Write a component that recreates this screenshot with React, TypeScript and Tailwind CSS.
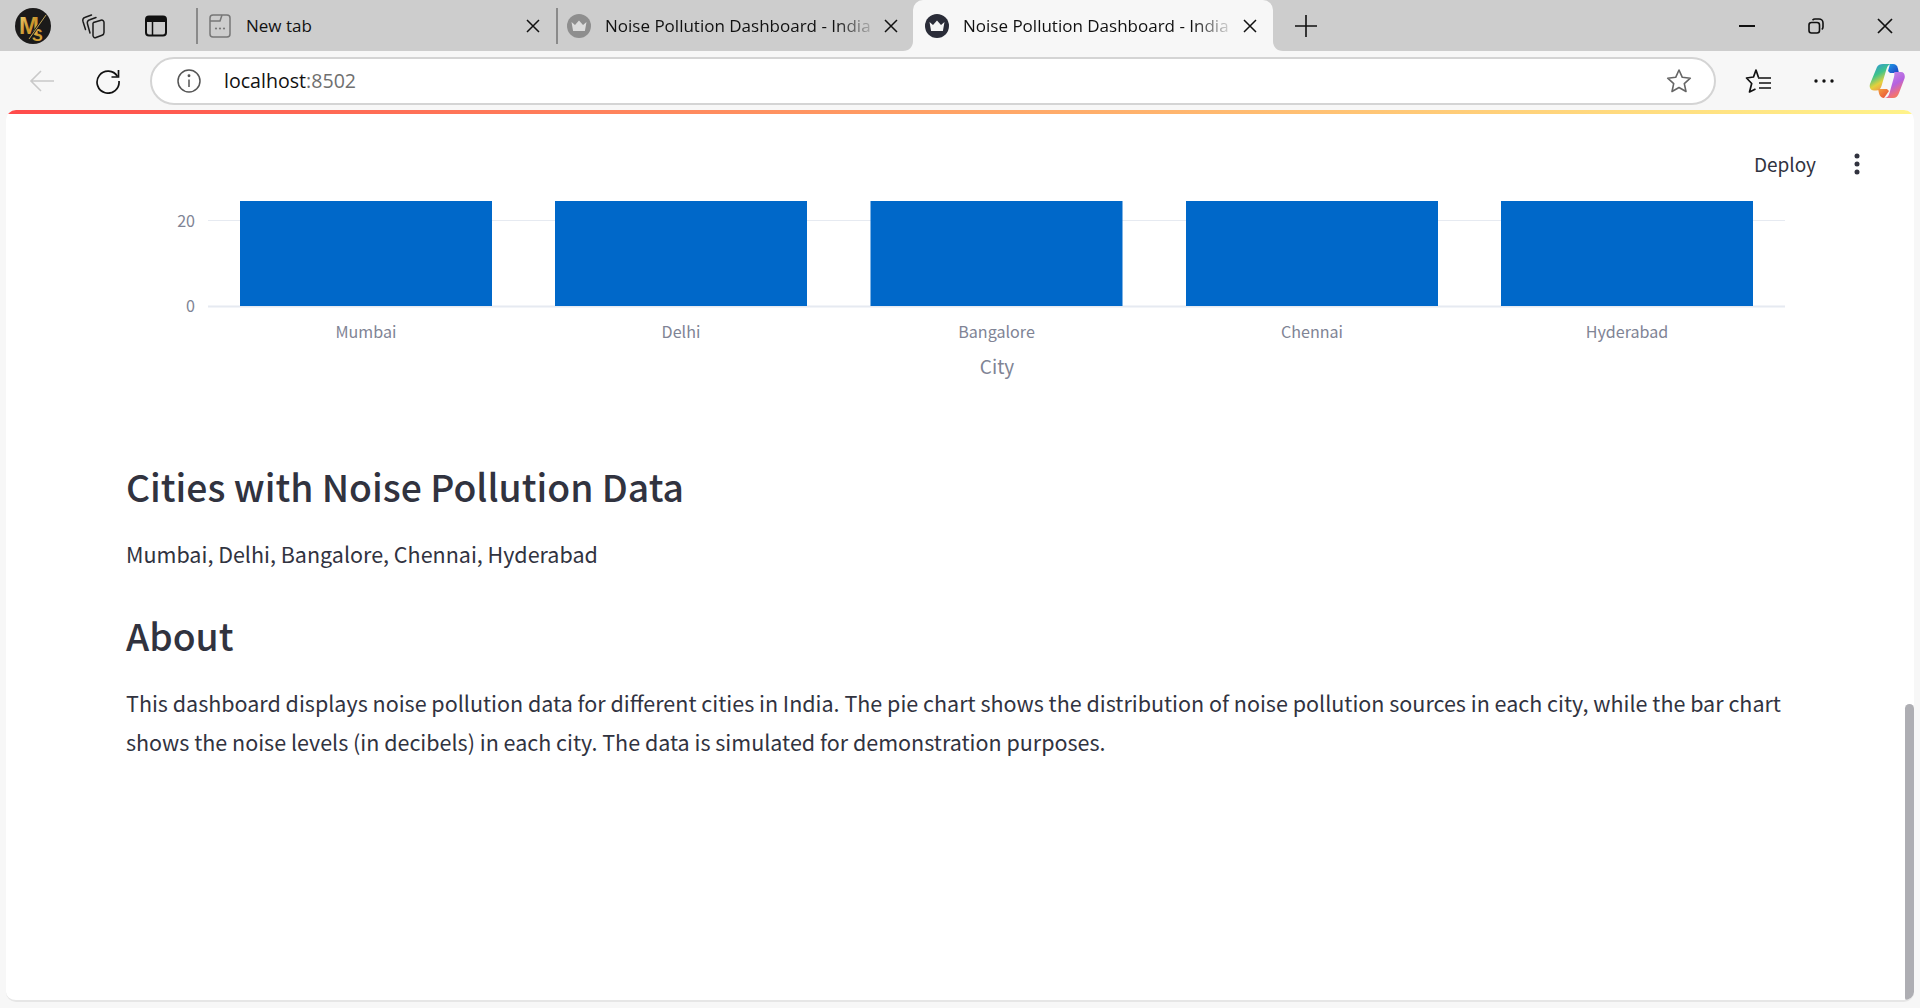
import React from "react";

const cjk = "font-['Noto_Sans_CJK_SC','Noto_Sans',sans-serif]";

function Crown({ active }: { active?: boolean }) {
  return (
    <svg width="24" height="24" viewBox="0 0 24 24" className="shrink-0">
      <circle cx="12" cy="12" r="12" fill={active ? "#2a2c38" : "#8e8e8e"} />
      <path d="M4.500 8 8 11l4-4.500 4 4.500 3.500-3-1.600 9H6.100z" fill={active ? "#f4f4f4" : "#dcdcdc"} />
    </svg>
  );
}

function CloseX() {
  return (
    <svg width="14" height="14" viewBox="0 0 14 14" className="shrink-0">
      <path d="M1 1l12 12M13 1L1 13" stroke="#111" strokeWidth="1.500" fill="none" />
    </svg>
  );
}

function Logo() {
  return (
    <svg width="36" height="36" viewBox="0 0 36 36">
      <defs>
        <linearGradient id="gold" x1="0" y1="0" x2="1" y2="1">
          <stop offset="0" stopColor="#f5d67a" />
          <stop offset="0.55" stopColor="#c8952b" />
          <stop offset="1" stopColor="#f0c14f" />
        </linearGradient>
      </defs>
      <circle cx="18" cy="18" r="18" fill="#1b1a1a" />
      <text x="4" y="26" fontSize="24" fontWeight="700" fill="url(#gold)" fontFamily="Liberation Sans, sans-serif">M</text>
      <text x="17" y="33" fontSize="16" fontWeight="700" fill="url(#gold)" fontFamily="Liberation Sans, sans-serif">S</text>
      <path d="M14 31 31 7" stroke="#1b1a1a" strokeWidth="2.500" />
      <path d="M14 31 31 7" stroke="#e8c465" strokeWidth="0.800" />
    </svg>
  );
}

function Copilot() {
  return (
    <svg width="36" height="38" viewBox="0 0 36 38">
      <defs>
        <linearGradient id="cpa" x1="0" y1="0" x2="0.500" y2="1">
          <stop offset="0" stopColor="#2b8be8" />
          <stop offset="0.45" stopColor="#3fc48a" />
          <stop offset="0.75" stopColor="#e3d13c" />
          <stop offset="1" stopColor="#f2994a" />
        </linearGradient>
        <linearGradient id="cpb" x1="0.200" y1="0" x2="0.700" y2="1">
          <stop offset="0" stopColor="#c48ce8" />
          <stop offset="0.5" stopColor="#b562e0" />
          <stop offset="0.8" stopColor="#ee6f7e" />
          <stop offset="1" stopColor="#f4824a" />
        </linearGradient>
        <linearGradient id="cpc" x1="0" y1="0" x2="1" y2="1">
          <stop offset="0" stopColor="#1f9be8" />
          <stop offset="1" stopColor="#1c3fc0" />
        </linearGradient>
        <linearGradient id="cpd" x1="0" y1="0" x2="1" y2="1">
          <stop offset="0" stopColor="#f4a23d" />
          <stop offset="1" stopColor="#e8483a" />
        </linearGradient>
      </defs>
      <path d="M21 2h3c2.500 0 4 1.500 4.800 4L30 11h-9L19 9z" fill="url(#cpc)" />
      <path d="M8 5c1-2 3-3 6-3h9c-3 0-4.500 1.500-5.500 5l-5 17c-1 3-2.500 4.500-5.500 4.500H5c-3.500 0-5-3-4-6.500z" fill="url(#cpa)" />
      <path d="M15 36c-2 0-4-1.500-4.800-4L9 27h9l2 2z" fill="url(#cpd)" />
      <path d="M25 10h7c3 0 4.500 3 3.500 6.500L30 31c-1 3-3 5-6 5h-9c3 0 4.500-1.500 5.500-5l4.500-16c.5-2 .5-5 0-5z" fill="url(#cpb)" />
    </svg>
  );
}

function TabCornerL() {
  return (
    <svg width="10" height="10" viewBox="0 0 10 10" className="absolute bottom-0 -left-[10px]">
      <path d="M10 0v10H0c6 0 10-4 10-10z" fill="#f7f7f7" />
    </svg>
  );
}
function TabCornerR() {
  return (
    <svg width="10" height="10" viewBox="0 0 10 10" className="absolute bottom-0 -right-[10px]">
      <path d="M0 0v10H10C4 10 0 6 0 0z" fill="#f7f7f7" />
    </svg>
  );
}

function Tabs() {
  const tabText = "text-[17px] leading-none text-[#111] font-['Open_Sans',sans-serif] whitespace-nowrap";
  const fade = "overflow-hidden [mask-image:linear-gradient(to_right,black_86%,rgba(0,0,0,0.12)_100%)]";
  return (
    <div className="flex h-[51px] bg-[#cdcdcd] items-center">
      <div className="w-[66px] pl-[15px] flex items-center"><Logo /></div>
      <div className="w-[54px] flex justify-center pr-[2px]">
        <svg width="26" height="26" viewBox="0 0 26 26" fill="none" stroke="#1b1b1b" strokeWidth="1.500" strokeLinecap="round">
          <path d="M14.500 9.500 22 7.200a2.300 2.300 0 0 1 3 2.300v10a3 3 0 0 1-2 2.800l-6 2.200a2.200 2.200 0 0 1-3-2V11.500a2.200 2.200 0 0 1 .5-2z" />
          <path d="M11 20 8.500 11a3.500 3.500 0 0 1 2.300-4.300L17 4.500" />
          <path d="M6.500 16.500 4 8.500a3.500 3.500 0 0 1 2.300-4.300L12.500 2" />
        </svg>
      </div>
      <div className="w-[72px] flex justify-center">
        <svg width="24" height="24" viewBox="0 0 24 24">
          <rect x="2" y="2.500" width="20" height="19" rx="3" fill="none" stroke="#111" strokeWidth="2" />
          <path d="M2 5.500a3 3 0 0 1 3-3h14a3 3 0 0 1 3 3V8H2z" fill="#111" />
          <path d="M8.500 8v13" stroke="#111" strokeWidth="1.500" />
        </svg>
      </div>
      <div className="w-[2px] h-[36px] bg-[#8a8a8a] ml-[4px]" />
      {/* New tab */}
      <div className="w-[358px] flex items-center pl-[11px] h-full">
        <svg width="22" height="26" viewBox="0 0 22 26" fill="none" className="shrink-0">
          <rect x="1" y="2" width="20" height="22" rx="3" stroke="#777" strokeWidth="1.500" />
          <path d="M1 8h10l2-6" stroke="#777" strokeWidth="1.500" />
          <circle cx="7" cy="15.500" r="1.100" fill="#777" />
          <circle cx="11" cy="15.500" r="1.100" fill="#777" />
          <circle cx="15" cy="15.500" r="1.100" fill="#777" />
        </svg>
        <span className={`${tabText} ml-[15px] flex-1`}>New tab</span>
        <span className="mr-[16px]"><CloseX /></span>
      </div>
      <div className="w-[2px] h-[36px] bg-[#8a8a8a]" />
      {/* Inactive tab */}
      <div className="w-[355px] flex items-center pl-[9px] h-full">
        <Crown />
        <span className={`${tabText} ${fade} ml-[14px] w-[268px]`}>Noise Pollution Dashboard - India</span>
        <span className="ml-[11px]"><CloseX /></span>
      </div>
      {/* Active tab */}
      <div className="relative w-[360px] h-full bg-[#f7f7f7] rounded-t-[10px] flex items-center pl-[12px]">
        <TabCornerL />
        <Crown active />
        <span className={`${tabText} ${fade} ml-[14px] w-[267px]`}>Noise Pollution Dashboard - India</span>
        <span className="ml-[13px]"><CloseX /></span>
        <TabCornerR />
      </div>
      <div className="ml-[21px]">
        <svg width="24" height="24" viewBox="0 0 24 24"><path d="M12 1v22M1 12h22" stroke="#111" strokeWidth="1.600" /></svg>
      </div>
      <div className="flex-1" />
      <div className="w-[68px] flex justify-center">
        <svg width="16" height="4" viewBox="0 0 16 4"><path d="M0 2h16" stroke="#111" strokeWidth="2" /></svg>
      </div>
      <div className="w-[68px] flex justify-center ml-[1px]">
        <svg width="16" height="16" viewBox="0 0 16 16" fill="none" stroke="#111" strokeWidth="1.600">
          <rect x="1" y="4.500" width="10.500" height="10.500" rx="2.500" />
          <path d="M4.500 2.200c.7-.8 1.500-1.200 2.500-1.200h4a4 4 0 0 1 4 4v4c0 1-.4 1.800-1.200 2.500" />
        </svg>
      </div>
      <div className="w-[70px] pr-[27px] flex justify-end">
        <svg width="16" height="16" viewBox="0 0 16 16" className="shrink-0"><path d="M1 1l14 14M15 1L1 15" stroke="#111" strokeWidth="1.700" /></svg>
      </div>
    </div>
  );
}

function Toolbar() {
  return (
    <div className="flex h-[59px] bg-[#f7f7f7] items-center">
      <div className="w-[75px] flex justify-center pl-[8px]">
        <svg width="26" height="24" viewBox="0 0 26 24" fill="none" stroke="#c9c9c9" strokeWidth="1.600">
          <path d="M25 12H2M12 2 2 12l10 10" />
        </svg>
      </div>
      <div className="w-[75px] flex justify-center pr-[10px]">
        <svg width="26" height="26" viewBox="0 0 26 26" fill="none" stroke="#111" strokeWidth="1.700">
          <path d="M22.500 8.500A11 11 0 1 0 24 13" />
          <path d="M23.500 2v7h-7" />
        </svg>
      </div>
      <div className="w-[1566px] h-[48px] bg-white rounded-full border-2 border-[#d4d4d4] flex items-center">
        <div className="ml-[25px]">
          <svg width="24" height="24" viewBox="0 0 24 24" fill="none" stroke="#555" strokeWidth="1.500">
            <circle cx="12" cy="12" r="11" />
            <path d="M12 10.500V18" />
            <circle cx="12" cy="6.800" r="0.700" fill="#555" />
          </svg>
        </div>
        <span className="ml-[23px] text-[19.600px] leading-none font-['Open_Sans',sans-serif] text-[#111]">
          localhost<span className="text-[#6f6f6f]">:8502</span>
        </span>
        <div className="flex-1" />
        <div className="mr-[22px]">
          <svg width="26" height="26" viewBox="0 0 26 26" fill="none" stroke="#666" strokeWidth="1.600" strokeLinejoin="round">
            <path d="m13 2 3.300 7.300 8 .9-6 5.400 1.700 7.900-7-4-7 4 1.700-7.900-6-5.400 8-.9z" />
          </svg>
        </div>
      </div>
      <div className="ml-[29px]">
        <svg width="28" height="28" viewBox="0 0 28 28" fill="none" stroke="#111" strokeWidth="1.700" strokeLinejoin="round">
          <path d="M13.500 10.500 11 3 8.500 10 1.500 11l5.200 5.500L4.500 25l6-3" />
          <path d="M13 11h13M14 16h12M14 21h12" />
        </svg>
      </div>
      <div className="ml-[41px]">
        <svg width="20" height="4" viewBox="0 0 20 4" fill="#111">
          <circle cx="2" cy="2" r="1.700" /><circle cx="10" cy="2" r="1.700" /><circle cx="18" cy="2" r="1.700" />
        </svg>
      </div>
      <div className="ml-[35px]"><Copilot /></div>
    </div>
  );
}

const cities = [
  { name: "Mumbai", x: 240 },
  { name: "Delhi", x: 555 },
  { name: "Bangalore", x: 870.500 },
  { name: "Chennai", x: 1186 },
  { name: "Hyderabad", x: 1501 },
];

function Chart() {
  // coordinates: x is page x minus 126, y is page y minus 190
  const ox = 126;
  const oy = 190;
  const font = "Noto Sans CJK SC, Noto Sans, sans-serif";
  return (
    <svg width="1700" height="200" viewBox="0 0 1700 200" className="block">
      <path d={`M${208 - ox} ${220.500 - oy}H${1785 - ox}`} stroke="#e6eaf1" strokeWidth="1" />
      <path d={`M${208 - ox} ${306.500 - oy}H${1785 - ox}`} stroke="#e6eaf1" strokeWidth="2" />
      {cities.map((c) => (
        <g key={c.name}>
          <rect x={c.x - ox} y={201 - oy} width="252" height="105" fill="#0068c9" />
          <text x={c.x + 126 - ox} y={338 - oy} textAnchor="middle" fontSize="16.100" fill="#808495" fontFamily={font}>{c.name}</text>
        </g>
      ))}
      <text x={195 - ox} y={227 - oy} textAnchor="end" fontSize="16.100" fill="#808495" fontFamily={font}>20</text>
      <text x={195 - ox} y={312 - oy} textAnchor="end" fontSize="16.100" fill="#808495" fontFamily={font}>0</text>
      <text x={997 - ox} y={374 - oy} textAnchor="middle" fontSize="19" fill="#808495" fontFamily={font}>City</text>
    </svg>
  );
}

export default function App() {
  return (
    <div className={`h-[1008px] w-full overflow-hidden bg-[#f7f7f7] ${cjk}`}>
      <Tabs />
      <Toolbar />
      <main className="relative mx-[6px] h-[892px] bg-white rounded-[10px] overflow-hidden border-b-2 border-[#e6e6e6]">
        <div className="h-[4px] bg-[linear-gradient(90deg,#ff4b4b,#ffa366_50%,#fff38a)]" />
        <div className="absolute top-[43px] right-[48px] flex items-center">
          <span className="text-[19px] leading-none text-[#31333f] mr-[38px] -mt-[1px]">Deploy</span>
          <svg width="6" height="22" viewBox="0 0 6 22" fill="#31333f" className="mr-[6px]">
            <circle cx="3" cy="3" r="2.500" /><circle cx="3" cy="11" r="2.500" /><circle cx="3" cy="19" r="2.500" />
          </svg>
        </div>
        <div className="absolute top-[594px] right-0 w-[9px] h-[298px] bg-[#aeaeb3] rounded-full" />
        <div className="pl-[120px] pt-[76px] text-[#31333f]">
          <Chart />
          <h2 className="mt-[72px] text-[37.300px] leading-[48px] font-medium">Cities with Noise Pollution Data</h2>
          <p className="mt-[24px] text-[21.500px] leading-[39px]">Mumbai, Delhi, Bangalore, Chennai, Hyderabad</p>
          <h2 className="mt-[38px] text-[37.300px] leading-[48px] font-medium">About</h2>
          <p className="mt-[24px] w-[1680px] text-[21.500px] leading-[39px]">
            This dashboard displays noise pollution data for different cities in India. The pie chart shows the distribution of noise pollution sources in each city, while the bar chart shows the noise levels (in decibels) in each city. The data is simulated for demonstration purposes.
          </p>
        </div>
      </main>
    </div>
  );
}
